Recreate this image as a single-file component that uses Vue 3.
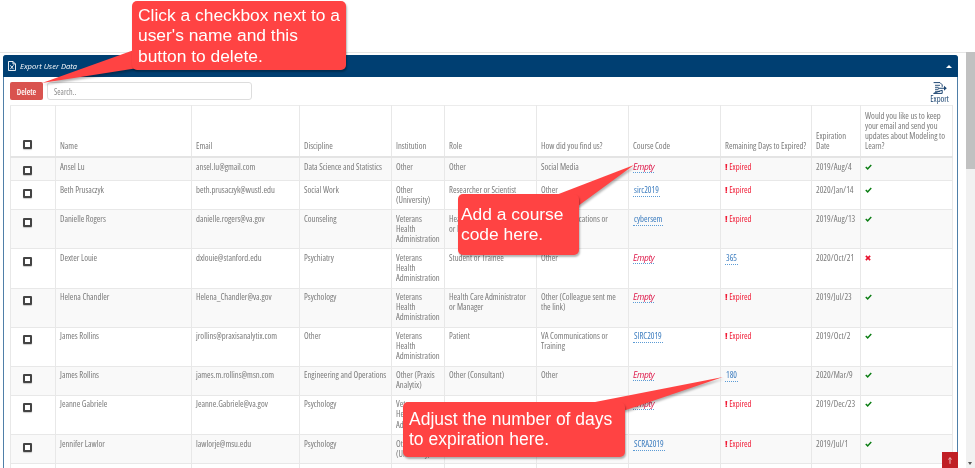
<script setup>
const columns = [
  { label: '', width: 45 },
  { label: 'Name', width: 136 },
  { label: 'Email', width: 108 },
  { label: 'Discipline', width: 92 },
  { label: 'Institution', width: 53 },
  { label: 'Role', width: 92 },
  { label: 'How did you find us?', width: 92 },
  { label: 'Course Code', width: 92 },
  { label: 'Remaining Days to Expired?', width: 91 },
  { label: 'Expiration Date', width: 49 },
  { label: 'Would you like us to keep your email and send you updates about Modeling to Learn?', width: 92 }
];

const vha = 'Veterans Health Administration';

const users = [
  { name: 'Ansel Lu', email: 'ansel.lu@gmail.com', discipline: 'Data Science and Statistics', institution: 'Other', role: 'Other', source: 'Social Media', code: '', days: 0, date: '2019/Aug/4', keep: true },
  { name: 'Beth Prusaczyk', email: 'beth.prusaczyk@wustl.edu', discipline: 'Social Work', institution: 'Other (University)', role: 'Researcher or Scientist', source: 'Other', code: 'sirc2019', days: 0, date: '2020/Jan/14', keep: true },
  { name: 'Danielle Rogers', email: 'danielle.rogers@va.gov', discipline: 'Counseling', institution: vha, role: 'Health Care Administrator or Manager', source: 'VA Communications or Training', code: 'cybersem', days: 0, date: '2019/Aug/13', keep: true },
  { name: 'Dexter Louie', email: 'dxlouie@stanford.edu', discipline: 'Psychiatry', institution: vha, role: 'Student or Trainee', source: 'Other', code: '', days: 365, date: '2020/Oct/21', keep: false },
  { name: 'Helena Chandler', email: 'Helena_Chandler@va.gov', discipline: 'Psychology', institution: vha, role: 'Health Care Administrator or Manager', source: 'Other (Colleague sent me the link)', code: '', days: 0, date: '2019/Jul/23', keep: true },
  { name: 'James Rollins', email: 'jrollins@praxisanalytix.com', discipline: 'Other', institution: vha, role: 'Patient', source: 'VA Communications or Training', code: 'SIRC2019', days: 0, date: '2019/Oct/2', keep: true },
  { name: 'James Rollins', email: 'james.m.rollins@msn.com', discipline: 'Engineering and Operations', institution: 'Other (Praxis Analytix)', role: 'Other (Consultant)', source: 'Other', code: '', days: 180, date: '2020/Mar/9', keep: true },
  { name: 'Jeanne Gabriele', email: 'Jeanne.Gabriele@va.gov', discipline: 'Psychology', institution: vha, role: '', source: '', code: '', days: 0, date: '2019/Dec/23', keep: true },
  { name: 'Jennifer Lawlor', email: 'lawlorje@msu.edu', discipline: 'Psychology', institution: 'Other (University)', role: '', source: '', code: 'SCRA2019', days: 0, date: '2019/Jul/1', keep: true }
];
</script>

<template>
  <div class="page">
    <div class="main">
      <div class="panel">
        <div class="panel-head">
          <svg class="xls" viewBox="0 0 8 10" width="8" height="10">
            <path d="M.5.5h4.500l2.500 2.500v6.500h-7z M5 .5v2.500h2.500" fill="none" stroke="#fff" stroke-width=".9" />
            <path d="M2.300 4.300l3.200 3.900M5.500 4.300l-3.200 3.900" stroke="#fff" stroke-width=".9" />
          </svg>
          <span class="panel-title">Export User Data</span>
          <span class="caret"></span>
        </div>
        <div class="panel-body">
          <div class="toolbar">
            <button class="delete">Delete</button>
            <input class="search" placeholder="Search.." />
            <div class="export">
              <svg viewBox="0 0 14 12" width="14" height="12">
                <path d="M.6.6h6.400l2.200 2.200v2M9.200 8.200v3.200H.6z" fill="none" stroke="#1d4672" stroke-width="1" />
                <path d="M2 3.300h5M2 5.300h3.500M2 7.300h3.500M2 9.300h5" stroke="#1d4672" stroke-width=".9" />
                <path d="M5 5.700h6v-2l2.800 2.500-2.800 2.500v-2h-6z" fill="#1d4672" />
              </svg>
              <span>Export</span>
            </div>
          </div>
          <table class="users">
            <colgroup>
              <col v-for="c in columns" :key="c.label" :style="{ width: c.width + 'px' }" />
            </colgroup>
            <thead>
              <tr>
                <th v-for="(c, i) in columns" :key="c.label">
                  <span v-if="i === 0" class="check-box head-box"></span>
                  <template v-else>{{ c.label }}</template>
                </th>
              </tr>
            </thead>
            <tbody>
              <tr v-for="(u, i) in users" :key="i">
                <td><span class="check-box"></span></td>
                <td>{{ u.name }}</td>
                <td>{{ u.email }}</td>
                <td>{{ u.discipline }}</td>
                <td class="institution">{{ u.institution }}</td>
                <td>{{ u.role }}</td>
                <td>{{ u.source }}</td>
                <td>
                  <a v-if="u.code" class="editable">{{ u.code }}</a>
                  <a v-else class="editable empty">Empty</a>
                </td>
                <td>
                  <a v-if="u.days" class="editable">{{ u.days }}</a>
                  <span v-else class="expired"><b>!</b> Expired</span>
                </td>
                <td>{{ u.date }}</td>
                <td>
                  <svg v-if="u.keep" class="mark" viewBox="0 0 8 7" width="7" height="6">
                    <path d="M.8 3.600l2.200 2.100 4.200-4.600" fill="none" stroke="#0a7d12" stroke-width="1.700" />
                  </svg>
                  <svg v-else class="mark" viewBox="0 0 7 7" width="6" height="6">
                    <path d="M1 1l5 5M6 1l-5 5" fill="none" stroke="#e8112d" stroke-width="1.900" />
                  </svg>
                </td>
              </tr>
              <tr>
                <td v-for="c in columns" :key="c.label">&nbsp;</td>
              </tr>
            </tbody>
          </table>
        </div>
      </div>
    </div>
    <div class="scrollbar">
      <div class="thumb"></div>
      <span class="down"></span>
    </div>

    <button class="to-top">
      <svg viewBox="0 0 6 10" width="4" height="7">
        <path d="M3 10V2.500M.8 3.500L3 .6l2.200 2.900" fill="none" stroke="#fff" stroke-width="1.100" />
      </svg>
    </button>

    <svg class="tails" width="975" height="468" viewBox="0 0 975 468">
      <polygon points="42,83 134,50 138,68" />
      <polygon points="634,165 556,195 578,206" />
      <polygon points="723,377 590,403 626,410" />
    </svg>
    <div class="callout callout-delete">Click a checkbox next to a user's name and this button to delete.</div>
    <div class="callout callout-code">Add a course code here.</div>
    <div class="callout callout-days">Adjust the number of days to expiration here.</div>
  </div>
</template>

<style>
html, body {
  margin: 0;
  overflow: hidden;
  background: #fff;
}
</style>

<style scoped>
.page {
  position: relative;
  width: 975px;
  height: 468px;
  overflow: hidden;
  display: flex;
  align-items: flex-start;
  padding-top: 52px;
  box-sizing: border-box;
  font-family: "Open Sans", "Liberation Sans", sans-serif;
  font-size: 8.600px;
  font-stretch: 75%;
  color: #7a7a7a;
  filter: blur(.3px);
}

.main {
  width: 966px;
  height: 416px;
  overflow: hidden;
  border-top: 1px solid #e6e6e6;
  padding: 2px 8px 0 3px;
  box-sizing: border-box;
}

.panel {
  border: 1px solid #4f7fa8;
  border-radius: 3px 3px 0 0;
}

.panel-head {
  height: 22px;
  margin: -1px -1px 0;
  background: #003f72;
  border-radius: 3px 3px 0 0;
  display: flex;
  align-items: center;
  padding: 0 6px 0 5px;
  color: #fff;
}

.panel-title {
  margin-left: 4px;
  font-style: italic;
  font-size: 7.600px;
  font-stretch: normal;
}

.caret {
  margin-left: auto;
  width: 0;
  height: 0;
  border: 3px solid transparent;
  border-top: 0;
  border-bottom: 3px solid #fff;
}

.panel-body {
  padding: 5px 5px 0 6px;
}

.toolbar {
  display: flex;
  align-items: flex-start;
  gap: 4px;
  height: 23px;
}

.delete {
  width: 33px;
  height: 18px;
  border: 0;
  border-radius: 2px;
  padding: 0;
  background: #d9534f;
  color: #fff;
  font-family: inherit;
  font-size: 8.300px;
  font-stretch: 75%;
  font-weight: 600;
}

.search {
  width: 205px;
  height: 18px;
  box-sizing: border-box;
  border: 1px solid #ddd;
  border-radius: 3px;
  padding: 0 6px;
  font-family: inherit;
  font-size: 8px;
  font-stretch: 75%;
}

.search::placeholder {
  color: #8a8a8a;
}

.export {
  margin-left: auto;
  margin-right: 3px;
  display: flex;
  flex-direction: column;
  align-items: center;
  color: #1d4672;
  font-size: 8.500px;
  line-height: 9px;
}

.users {
  width: 942px;
  table-layout: fixed;
  border-collapse: collapse;
  line-height: 10.040px;
}

.users th,
.users td {
  border: 1px solid #e8e8e8;
  padding: 3.500px 4px 4.500px;
  text-align: left;
  font-weight: 400;
  vertical-align: top;
  overflow: hidden;
}

.users td.institution {
  padding-right: 6px;
}

.users th {
  padding: 5px 4px;
  vertical-align: bottom;
  border-top: 1px solid #ececec;
  border-bottom: 2px solid #e4e4e4;
}

.users tbody tr:nth-child(odd) {
  background: #f9f9f9;
}

.check-box {
  display: block;
  width: 5px;
  height: 5px;
  margin: 4px 0 1px 8px;
  border: 2px solid #444;
  border-radius: 1px;
  background: #fff;
  box-shadow: 0 1px 1px rgba(0, 0, 0, .2);
}

.head-box {
  margin-bottom: 2px;
}

.editable {
  color: #3b7cbf;
  padding: 0 1px;
  border-bottom: 1px dotted #5b9bd5;
}

.editable.empty {
  color: #dd1144;
  font-style: italic;
  font-size: 8.400px;
  font-stretch: normal;
  letter-spacing: -.35px;
  padding: 0;
}

.expired {
  color: #f01c36;
}

.expired b {
  font-weight: 800;
  font-size: 9.500px;
}

.mark {
  display: block;
  margin-top: 2px;
}

.scrollbar {
  position: relative;
  width: 9px;
  height: 416px;
  background: #f1f1f1;
}

.thumb {
  height: 117px;
  background: #c1c1c1;
}

.down {
  position: absolute;
  left: 2px;
  bottom: 3px;
  width: 0;
  height: 0;
  border: 2.500px solid transparent;
  border-bottom: 0;
  border-top: 3px solid #555;
}

.to-top {
  position: absolute;
  left: 942px;
  top: 452px;
  width: 16px;
  height: 16px;
  border: 0;
  padding: 0;
  background: #c01f25;
  display: flex;
  align-items: center;
  justify-content: center;
}

.tails {
  position: absolute;
  left: 0;
  top: 0;
  fill: #ff4343;
  filter: drop-shadow(1px 2px 1px rgba(0, 0, 0, .3));
}

.callout {
  position: absolute;
  box-sizing: border-box;
  background: #ff4343;
  border-radius: 5px;
  color: #fff;
  font-family: "Liberation Sans", Arial, sans-serif;
  font-size: 17.400px;
  font-stretch: normal;
  line-height: 20.300px;
  padding: 4px 2px 4px 6px;
  box-shadow: 1px 2px 2px rgba(0, 0, 0, .3);
}

.callout-delete {
  left: 132px;
  top: 1px;
  width: 214px;
  height: 69px;
}

.callout-code {
  left: 458px;
  top: 194px;
  width: 121px;
  height: 61px;
  padding: 10px 2px 4px 3px;
}

.callout-days {
  left: 403px;
  top: 402px;
  width: 222px;
  height: 55px;
  padding-top: 7px;
  font-size: 17.500px;
}
</style>
